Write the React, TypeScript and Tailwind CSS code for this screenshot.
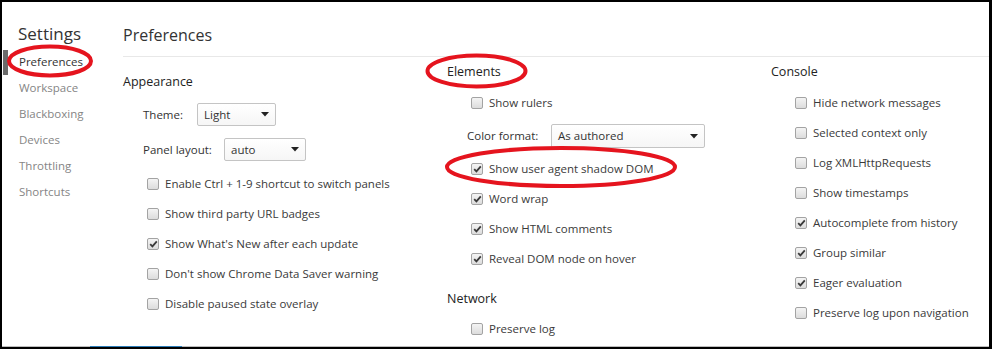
import React from 'react'

const font = "font-['Open_Sans','Noto_Sans',sans-serif]"

const Check = ({ checked }: { checked?: boolean }) => (
  <span className="w-[12px] h-[12px] mr-[6px] shrink-0 rounded-[2px] border border-[#a3a3a3] bg-gradient-to-b from-[#f4f4f4] to-[#dcdcdc] flex items-center justify-center">
    {checked && (
      <svg width="9" height="8" viewBox="0 0 9 8">
        <path d="M1.2 4.2 L3.4 6.4 L7.8 1.4" fill="none" stroke="#3a3a3a" strokeWidth="1.8" />
      </svg>
    )}
  </span>
)

const Row = ({ label, checked }: { label: string; checked?: boolean }) => (
  <div className="h-[30px] flex items-center pl-[24px] text-[11.5px] text-[#3a3a3a]">
    <Check checked={checked} />
    <span>{label}</span>
  </div>
)

const Select = ({ value, w, h = 'h-[23px]' }: { value: string; w: string; h?: string }) => (
  <div className={`${w} ${h} flex items-center justify-between pl-[6px] pr-[6px] border border-[#c4c4c4] rounded-[2px] bg-gradient-to-b from-white to-[#f6f6f6] text-[11.5px] text-[#333]`}>
    <span>{value}</span>
    <svg width="8" height="5" viewBox="0 0 8 5"><path d="M0 0 H8 L4 4.5 Z" fill="#222" /></svg>
  </div>
)

const Header = ({ title, mt }: { title: string; mt: string }) => (
  <div className={`${mt} h-[18px] leading-[18px] text-[12.5px] text-[#222]`}>{title}</div>
)

export default function App() {
  const nav = ['Preferences', 'Workspace', 'Blackboxing', 'Devices', 'Throttling', 'Shortcuts']
  return (
    <div className={`${font} relative w-[992px] h-[349px] bg-white border-solid border-black border-t-2 border-l-2 border-r-[3px] border-b-2 flex flex-col overflow-hidden`}>
      <div className="flex flex-1">
        {/* sidebar */}
        <div className="w-[121px] shrink-0">
          <div className="pt-[20px] pl-[16px] h-[46px] leading-[24px] text-[17px] text-[#333]">Settings</div>
          <div className="mt-[1px]">
            {nav.map((n, i) => (
              <div key={n} className="h-[26px] flex items-center">
                <span className={`ml-[1px] w-[5px] h-[25px] ${i === 0 ? 'bg-[#6b6b6b]' : 'bg-transparent'}`} />
                <span className={`pl-[11px] text-[11.5px] ${i === 0 ? 'text-[#333]' : 'text-[#858585]'}`}>{n}</span>
              </div>
            ))}
          </div>
        </div>

        {/* content */}
        <div className="flex-1 flex flex-col">
          <div className="pt-[22px] h-[55px] leading-[22px] text-[16px] text-[#333] border-b border-[#e8e8e8]">Preferences</div>
          <div className="flex">
            {/* Appearance */}
            <div className="w-[324px]">
              <Header title="Appearance" mt="mt-[16px]" />
              <div className="mt-[12px] flex items-center pl-[20px] text-[11.5px] text-[#333]">
                <span className="w-[54px]">Theme:</span>
                <Select value="Light" w="w-[79px]" />
              </div>
              <div className="mt-[12px] flex items-center pl-[20px] text-[11.5px] text-[#333]">
                <span className="w-[81px]">Panel layout:</span>
                <Select value="auto" w="w-[82px]" />
              </div>
              <div className="mt-[8px]">
                <Row label="Enable Ctrl + 1-9 shortcut to switch panels" />
                <Row label="Show third party URL badges" />
                <Row label="Show What's New after each update" checked />
                <Row label="Don't show Chrome Data Saver warning" />
                <Row label="Disable paused state overlay" />
              </div>
            </div>

            {/* Elements / Network */}
            <div className="w-[324px]">
              <Header title="Elements" mt="mt-[6px]" />
              <div className="mt-[7px]">
                <Row label="Show rulers" />
              </div>
              <div className="mt-[6px] flex items-center pl-[20px] text-[11.5px] text-[#333]">
                <span className="w-[84px]">Color format:</span>
                <Select value="As authored" w="w-[154px]" h="h-[24px]" />
              </div>
              <div className="mt-[6px]">
                <Row label="Show user agent shadow DOM" checked />
                <Row label="Word wrap" checked />
                <Row label="Show HTML comments" checked />
                <Row label="Reveal DOM node on hover" checked />
              </div>
              <Header title="Network" mt="mt-[16px]" />
              <div className="mt-[6px]">
                <Row label="Preserve log" />
              </div>
            </div>

            {/* Console */}
            <div className="flex-1">
              <Header title="Console" mt="mt-[6px]" />
              <div className="mt-[7px]">
                <Row label="Hide network messages" />
                <Row label="Selected context only" />
                <Row label="Log XMLHttpRequests" />
                <Row label="Show timestamps" />
                <Row label="Autocomplete from history" checked />
                <Row label="Group similar" checked />
                <Row label="Eager evaluation" checked />
                <Row label="Preserve log upon navigation" />
              </div>
            </div>
          </div>
        </div>
      </div>

      {/* bottom edge */}
      <div className="h-[1px] shrink-0 bg-[#bdbdbd] flex">
        <span className="ml-[88px] w-[92px] bg-[#2d7db8]" />
      </div>

      {/* red annotation marks */}
      <svg className="absolute left-[-2px] top-[-2px] pointer-events-none" width="992" height="349">
        <ellipse cx="50" cy="61" rx="41" ry="14.5" fill="none" stroke="#e5141e" strokeWidth="4" />
        <ellipse cx="476.5" cy="71" rx="49" ry="15.5" fill="none" stroke="#e5141e" strokeWidth="4" />
        <ellipse cx="561" cy="167" rx="114" ry="19" fill="none" stroke="#e5141e" strokeWidth="4" />
      </svg>
    </div>
  )
}
